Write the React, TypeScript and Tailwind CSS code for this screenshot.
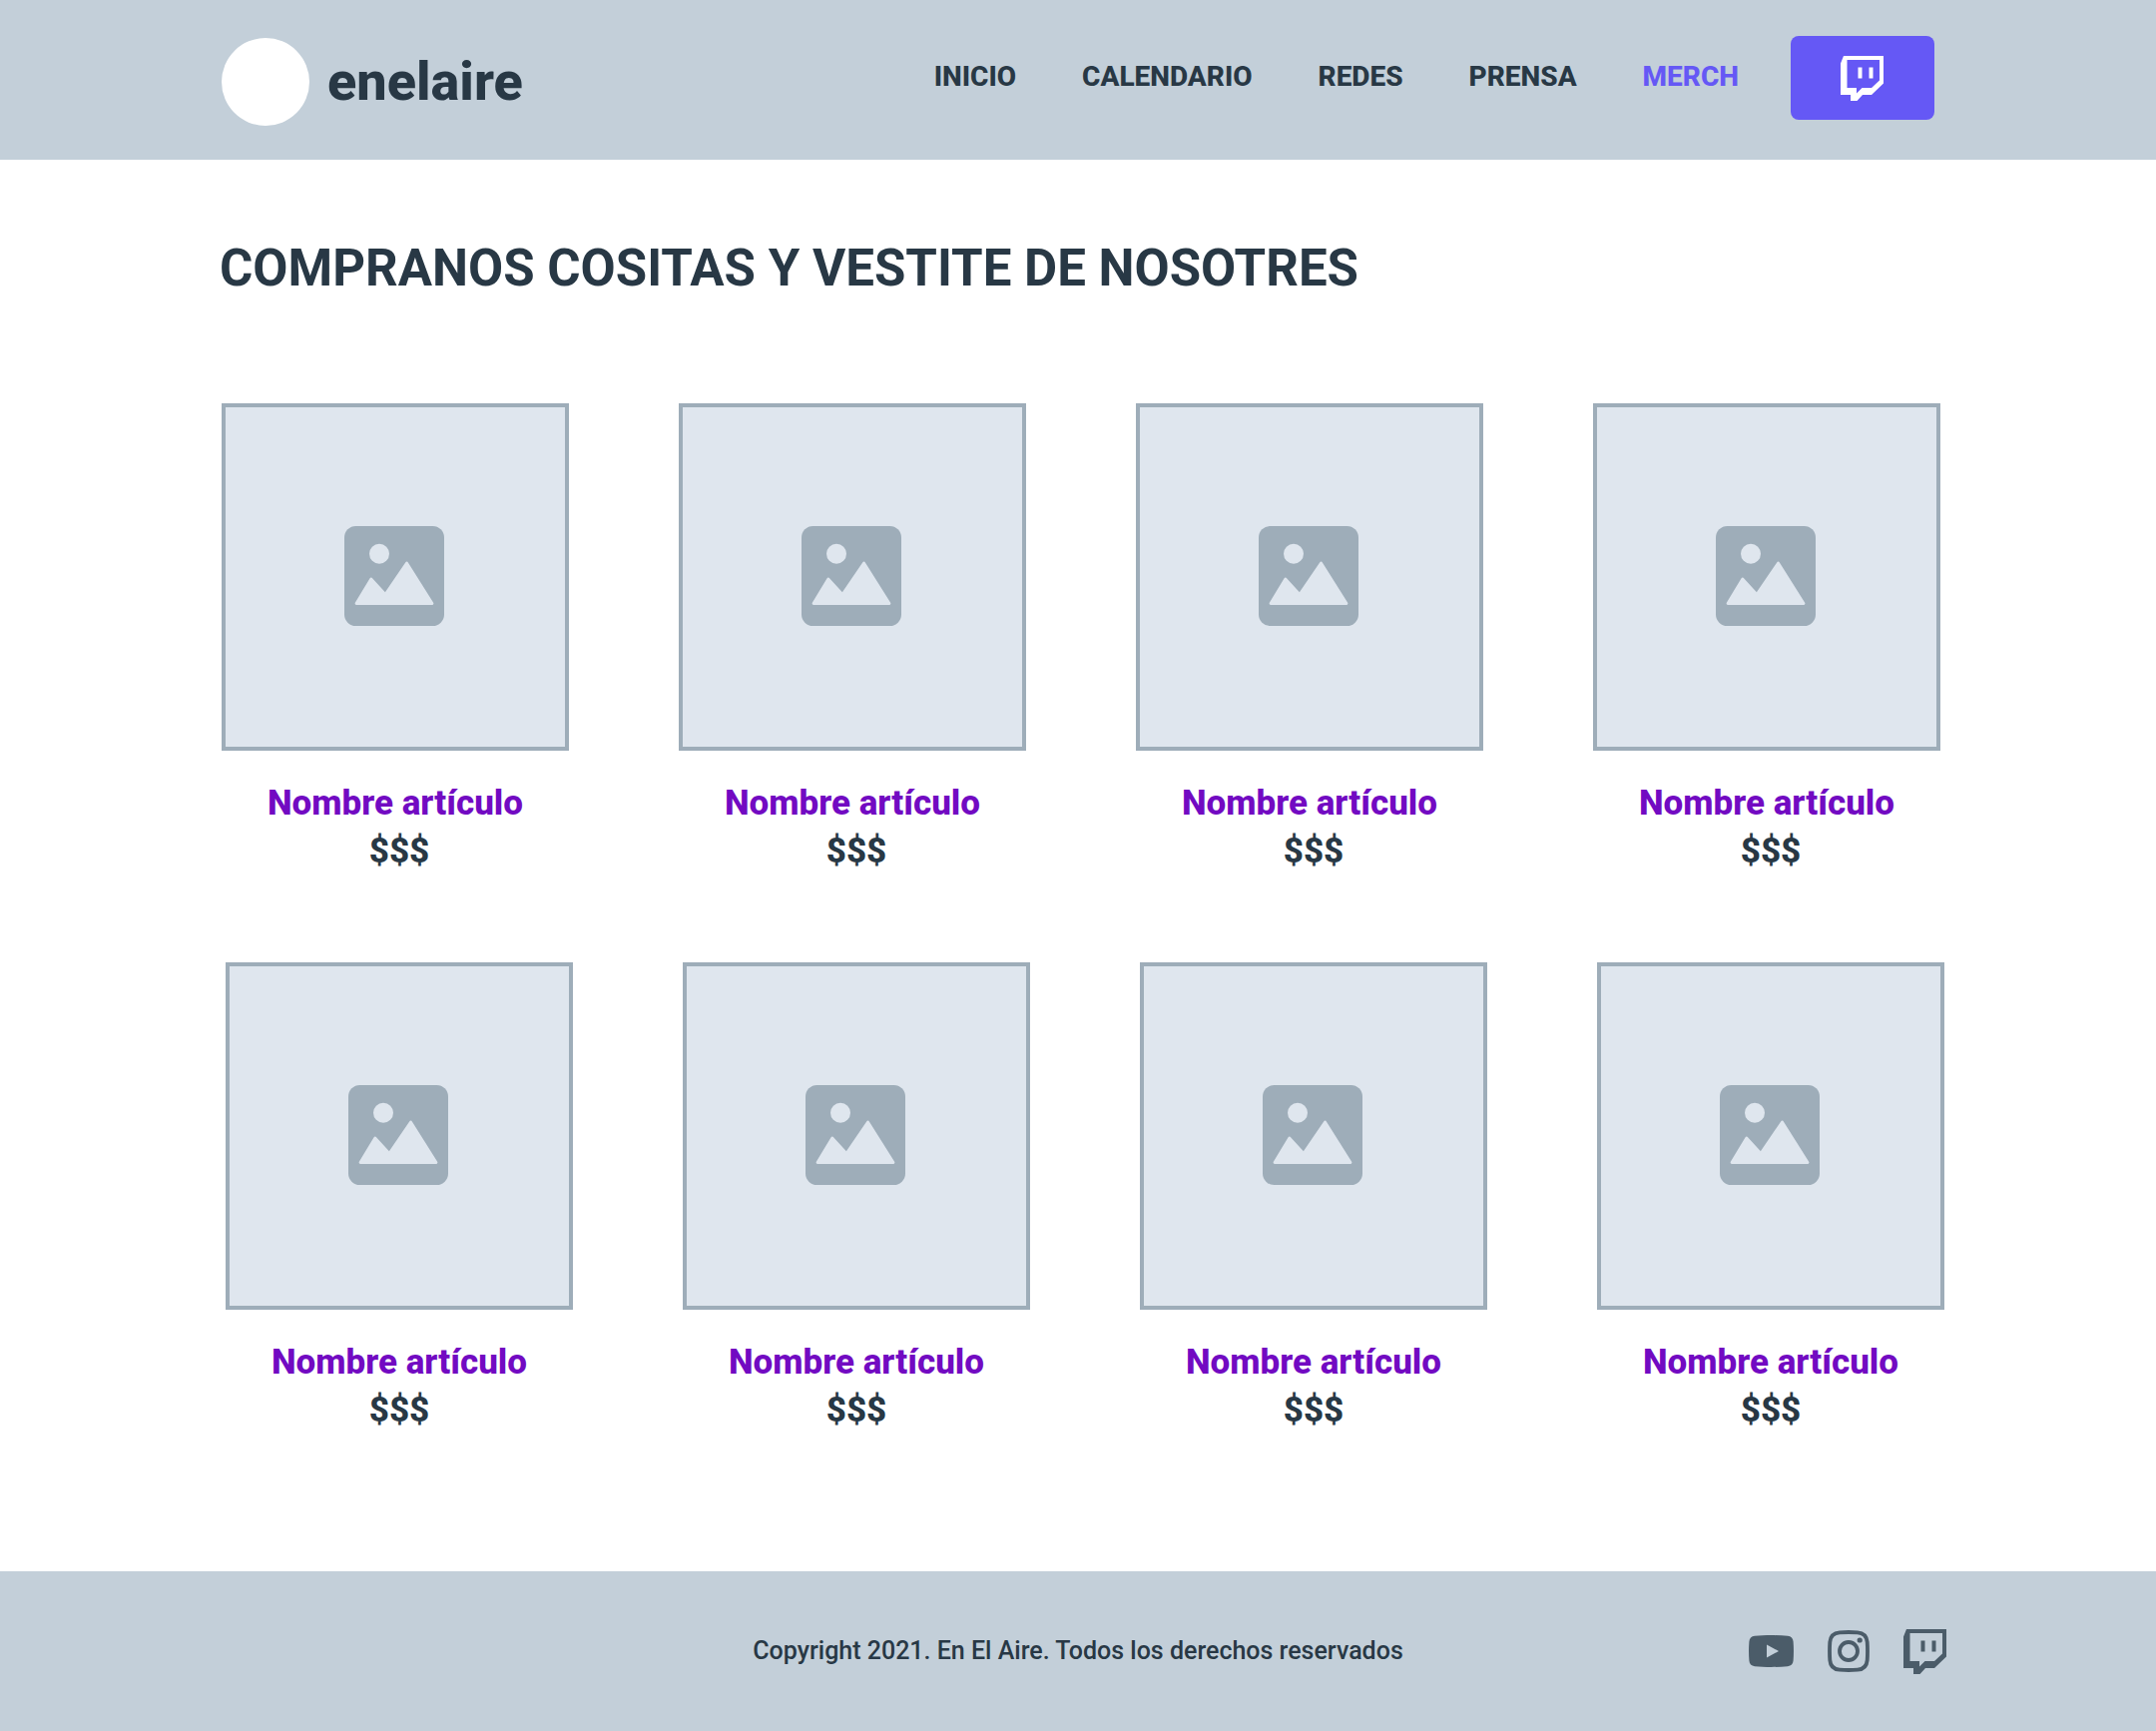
const ROBOTO = "font-['Roboto','Noto_Sans',sans-serif]";

const links = [
  { label: "INICIO", href: "#inicio" },
  { label: "CALENDARIO", href: "#calendario" },
  { label: "REDES", href: "#redes" },
  { label: "PRENSA", href: "#prensa" },
  { label: "MERCH", href: "#merch", current: true },
];

const rows = [
  { id: "a", rowClass: "pr-[6px]", priceClass: "pl-2" },
  { id: "b", rowClass: "pl-1 pr-[2px]", priceClass: "" },
];

function TwitchIcon({ className }: { className: string }) {
  return (
    <svg viewBox="0 0 43 45" className={className} fill="currentColor" aria-hidden="true">
      <path
        fillRule="evenodd"
        d="M3 0H43V27.500L31 39H22L16.500 45H10V39H0V7.500ZM6.500 4V32H16V37.500L21.500 32H31L39 24.500V4ZM17.500 11.500H21.500V22.500H17.500ZM28.500 11.500H32.500V22.500H28.500Z"
      />
    </svg>
  );
}

function YoutubeIcon() {
  return (
    <svg viewBox="0 0 45 32" className="h-8 w-[45px]" fill="currentColor" aria-hidden="true">
      <path
        fillRule="evenodd"
        d="M6 .8C16 -.2 29 -.2 39 .8C42.500 1.200 44.300 3.200 44.600 6.500C45.100 12.500 45.100 19.500 44.600 25.500C44.300 28.800 42.500 30.800 39 31.200C29 32.200 16 32.200 6 31.200C2.500 30.800 .7 28.800 .4 25.500C-.1 19.500 -.1 12.500 .4 6.500C.7 3.200 2.500 1.200 6 .8ZM18 9.500V22.500L30 16Z"
      />
    </svg>
  );
}

function InstagramIcon() {
  return (
    <svg viewBox="0 0 42 42" className="size-[42px]" fill="none" stroke="currentColor" strokeWidth="3.800" aria-hidden="true">
      <path d="M12 2.300Q21 1.700 30 2.300Q39 3 39.700 12Q40.300 21 39.700 30Q39 39 30 39.700Q21 40.300 12 39.700Q3 39 2.300 30Q1.700 21 2.300 12Q3 3 12 2.300Z" />
      <circle cx="21" cy="21" r="9" />
      <circle cx="32.200" cy="10" r="2.600" fill="currentColor" stroke="none" />
    </svg>
  );
}

function ImageIcon() {
  return (
    <svg viewBox="0 0 100 100" className="size-[100px]" aria-hidden="true">
      <rect width="100" height="100" rx="11.500" className="fill-[#9eadb9]" />
      <circle cx="35" cy="27.800" r="10" className="fill-[#dfe6ee]" />
      <path
        d="M12 77.500L26.800 53L41 68.500L62.500 37L88 77.500Z"
        className="fill-[#dfe6ee] stroke-[#dfe6ee]"
        strokeWidth="2.800"
        strokeLinejoin="round"
      />
    </svg>
  );
}

function Article({ priceClass }: { priceClass: string }) {
  return (
    <article className="text-center text-[35px] leading-[48px] font-extrabold">
      <div className="flex aspect-square items-center justify-center border-4 border-[#9eadb9] bg-[#dfe6ee] pr-[2px] pb-[2px]">
        <ImageIcon />
      </div>
      <h2 className="mt-[29px] whitespace-nowrap text-[#720ac2]">Nombre artículo</h2>
      <p className={priceClass}>$$$</p>
    </article>
  );
}

export default function App() {
  return (
    <div className={`flex min-h-screen flex-col bg-white text-[#283845] ${ROBOTO}`}>
      <header className="flex h-40 items-start justify-between bg-[#c3cfd9] px-[222px] pt-9">
        <a href="#inicio" className="mt-[2px] flex items-center gap-[18px]">
          <span className="size-[88px] rounded-full bg-white" />
          <span className="text-[54px] leading-[60px] font-extrabold">enelaire</span>
        </a>
        <nav className="flex h-[84px] items-center gap-[52px]">
          <ul className="flex gap-[66px] pb-[2px] text-[28px] leading-10 font-extrabold">
            {links.map((link) => (
              <li key={link.label}>
                <a
                  href={link.href}
                  aria-current={link.current ? "page" : undefined}
                  className={link.current ? "text-[#6558f5]" : ""}
                >
                  {link.label}
                </a>
              </li>
            ))}
          </ul>
          <button
            type="button"
            aria-label="Twitch"
            className="flex h-[84px] w-36 items-center justify-center rounded-lg bg-[#6558f5] pr-[2px] text-white"
          >
            <TwitchIcon className="h-[45px] w-[43px]" />
          </button>
        </nav>
      </header>

      <main className="grow pt-[79px] pr-[210px] pb-[137px] pl-[220px]">
        <h1 className="text-[51px] leading-[60px] font-bold">COMPRANOS COSITAS Y VESTITE DE NOSOTRES</h1>
        <div className="mt-[105px] flex flex-col gap-[87px] pl-[2px]">
          {rows.map((row) => (
            <div key={row.id} className={`grid grid-cols-4 gap-[110px] ${row.rowClass}`}>
              {[1, 2, 3, 4].map((n) => (
                <Article key={n} priceClass={row.priceClass} />
              ))}
            </div>
          ))}
        </div>
      </main>

      <footer className="grid h-40 grid-cols-[1fr_auto_1fr] items-center bg-[#c3cfd9] px-[210px]">
        <p className="col-start-2 text-[25px] leading-8 font-medium">
          Copyright 2021. En El Aire. Todos los derechos reservados
        </p>
        <div className="flex items-center justify-end gap-[34px] text-[#4b5c69]">
          <a href="#youtube" aria-label="YouTube">
            <YoutubeIcon />
          </a>
          <a href="#instagram" aria-label="Instagram">
            <InstagramIcon />
          </a>
          <a href="#twitch" aria-label="Twitch">
            <TwitchIcon className="h-[45px] w-[43px]" />
          </a>
        </div>
      </footer>
    </div>
  );
}
